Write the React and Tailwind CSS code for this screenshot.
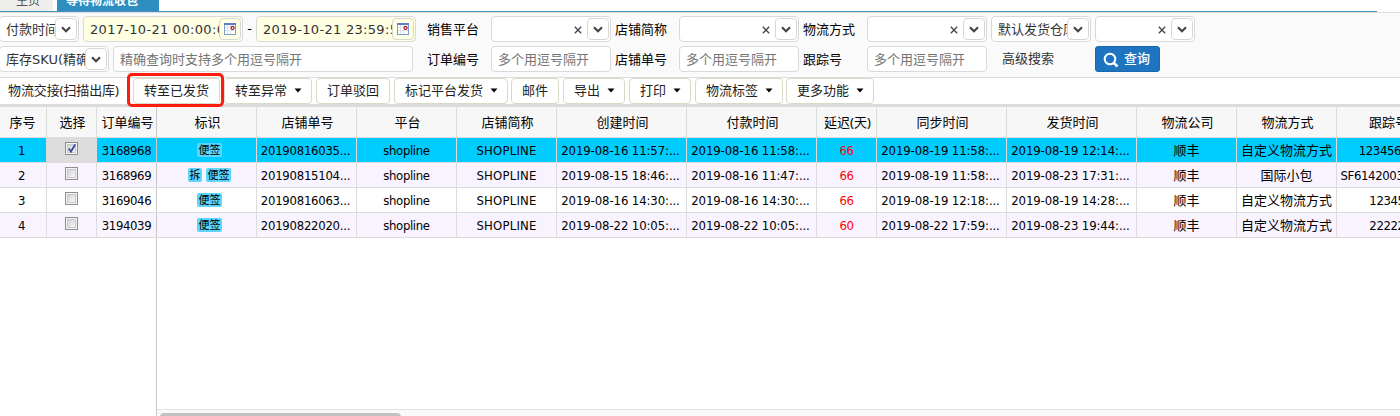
import React, { useState } from 'react'

function classNames(...s) { return s.filter(Boolean).join(' ') }

const COLUMNS = [
  { key: 'no', title: '序号', cls: 'w-[47px] pr-[3px]' },
  { key: 'check', title: '选择', cls: 'w-[50px]' },
  { key: 'order', title: '订单编号', cls: 'w-[60px]' },
  { key: 'tags', title: '标识', cls: 'w-[100px]' },
  { key: 'shopOrder', title: '店铺单号', cls: 'w-[100px]', text: 'tracking-[-0.26px] -ml-[2px]' },
  { key: 'platform', title: '平台', cls: 'w-[100px]' },
  { key: 'shop', title: '店铺简称', cls: 'w-[100px]', text: 'tracking-[0.2px]' },
  { key: 'created', title: '创建时间', cls: 'w-[130px]', text: 'tracking-[-0.1px] -ml-[2px]' },
  { key: 'paid', title: '付款时间', cls: 'w-[130px]', text: 'tracking-[-0.1px] -ml-[2px]' },
  { key: 'delay', title: '延迟(天)', cls: 'w-[60px]', text: 'text-[#f00]' },
  { key: 'synced', title: '同步时间', cls: 'w-[130px]', text: 'tracking-[-0.1px] -ml-[2px]' },
  { key: 'shipped', title: '发货时间', cls: 'w-[130px]', text: 'tracking-[-0.1px] -ml-[2px]' },
  { key: 'company', title: '物流公司', cls: 'w-[100px]', text: 'tracking-normal' },
  { key: 'method', title: '物流方式', cls: 'w-[100px]', text: 'tracking-normal' },
  { key: 'tracking', title: '跟踪号', cls: 'w-[102px]', text: '-ml-px' },
]

const ROWS = [
  { no: 1, order: '3168968', tags: ['便签'], shopOrder: '20190816035...', created: '2019-08-16 11:57:...', paid: '2019-08-16 11:58:...', delay: 66, synced: '2019-08-19 11:58:...', shipped: '2019-08-19 12:14:...', method: '自定义物流方式', tracking: '12345678' },
  { no: 2, order: '3168969', tags: ['拆', '便签'], shopOrder: '20190815104...', created: '2019-08-15 18:46:...', paid: '2019-08-16 11:47:...', delay: 66, synced: '2019-08-19 11:58:...', shipped: '2019-08-23 17:31:...', method: '国际小包', tracking: 'SF6142003...', long: true },
  { no: 3, order: '3169046', tags: ['便签'], shopOrder: '20190816063...', created: '2019-08-16 14:30:...', paid: '2019-08-16 14:30:...', delay: 66, synced: '2019-08-19 12:18:...', shipped: '2019-08-19 14:28:...', method: '自定义物流方式', tracking: '12345' },
  { no: 4, order: '3194039', tags: ['便签'], shopOrder: '20190822020...', created: '2019-08-22 10:05:...', paid: '2019-08-22 10:05:...', delay: 60, synced: '2019-08-22 17:59:...', shipped: '2019-08-23 19:44:...', method: '自定义物流方式', tracking: '22222' },
].map(r => ({ platform: 'shopline', shop: 'SHOPLINE', company: '顺丰', ...r }))

function Chevron() {
  return (
    <svg className="-ml-px" width="10" height="7" viewBox="0 0 10 7" fill="none" stroke="#444" strokeWidth="2.1">
      <path d="M1 1.2 L5 5.2 L9 1.2" />
    </svg>
  )
}

function CalendarIcon() {
  return (
    <svg width="12" height="12" viewBox="0 0 12 12">
      <rect x="0.5" y="0.5" width="11" height="11" fill="#fff" stroke="#7c9bd0" />
      <rect width="12" height="2" fill="#5b7fc0" />
      <path d="M3.5 2v9M6.5 2v9M1 4.5h10M1 7.5h10" stroke="#dde0e8" fill="none" />
      <circle cx="8.6" cy="4.9" r="1.5" fill="#fff" stroke="#a5181f" strokeWidth="1.2" />
    </svg>
  )
}

function InnerButton({ children }) {
  return <button className="flex h-[22px] w-[22px] shrink-0 items-center justify-center rounded-[4px] border border-[#d6d6d6] bg-white">{children}</button>
}

const FIELD = 'flex h-[26px] shrink-0 items-center rounded-[4px] border border-[#d9d9d9] bg-white'

function Select({ text, clear, className }) {
  return (
    <div className={classNames(FIELD, 'pr-px', className)}>
      <span className="min-w-0 flex-1 overflow-hidden pt-px pl-[6px] whitespace-nowrap text-[#333]">{text}</span>
      {clear && (
        <svg className="mt-px mr-[5px] shrink-0" width="8" height="8" viewBox="0 0 8 8" stroke="#444b55" strokeWidth="1.4">
          <path d="M0.8 0.8l6.4 6.4M7.2 0.8l-6.4 6.4" />
        </svg>
      )}
      <InnerButton><Chevron /></InnerButton>
    </div>
  )
}

function DateField({ value }) {
  return (
    <div className="flex h-[26px] w-[160px] shrink-0 items-center rounded-[4px] border border-[#d9d9d9] bg-[#ffffe4] pr-px">
      <span className="min-w-0 flex-1 overflow-hidden pt-px pl-[6px] tracking-[0.3px] whitespace-nowrap text-[#333]">{value}</span>
      <button className="flex h-[22px] w-[22px] shrink-0 items-center justify-center rounded-[4px] border border-[#d6d6d6] bg-[#ffffe4]"><CalendarIcon /></button>
    </div>
  )
}

function Input({ placeholder, className }) {
  return <div className={classNames(FIELD, 'pt-px pl-[6px] text-[#757575]', className)}>{placeholder}</div>
}

function Label({ children, className }) {
  return <span className={classNames('shrink-0 pt-px whitespace-nowrap text-black', className)}>{children}</span>
}

function ToolButton({ children, menu, className }) {
  return (
    <button className={classNames('flex h-[26px] shrink-0 items-center rounded-[4px] border border-[#d8d9c6] bg-white pb-[2px] pl-[10px] whitespace-nowrap text-[#222]', className)}>
      {children}
      {menu && <svg className="mt-px ml-[7px]" width="8" height="5" viewBox="0 0 8 5"><path d="M0.5 0.5h7L4 4.6z" fill="#000" /></svg>}
    </button>
  )
}

function Checkbox({ checked, onClick }) {
  return (
    <button onClick={onClick} className="mb-[3px] flex h-[13px] w-[13px] items-center justify-center border border-[#8e8f8f] bg-[#f4f4f4] p-px">
      <span className="block h-full w-full border border-[#c6c9cc] bg-linear-to-br from-[#cfd3d6] to-[#f8f8f8]">
        {checked && (
          <svg className="-mt-px" width="9" height="10" viewBox="0 0 9 10" fill="none" stroke="#3c4fa5" strokeWidth="1.9">
            <path d="M0.8 4.6 L3 7.6 L7.2 0.6" />
          </svg>
        )}
      </span>
    </button>
  )
}

function Cell({ col, row, checked, onToggle }) {
  if (col.key === 'check') return <Checkbox checked={checked} onClick={onToggle} />
  if (col.key === 'tags') {
    return (
      <div className="mb-px ml-[6px] flex gap-[4px]">
        {row.tags.map(t => <span key={t} className="h-[14px] rounded-[2px] bg-[#5cd6ff] px-[1.5px] font-['Noto_Sans_CJK_SC'] text-[11px] leading-[13px] tracking-normal">{t}</span>)}
      </div>
    )
  }
  return <span className={classNames('pt-[2px]', col.text, col.key === 'tracking' && row.long && 'pr-[20px]')}>{row[col.key]}</span>
}

export default function App() {
  const [checked, setChecked] = useState([1])
  const toggle = (no) => setChecked(c => c.includes(no) ? c.filter(n => n !== no) : [...c, no])

  return (
    <div className="flex h-[416px] w-[1400px] flex-col overflow-hidden bg-white font-['DejaVu_Sans','Noto_Sans_CJK_SC',sans-serif] text-[13px] leading-[20px]">
      <nav className="flex h-[12px] w-[1377px] shrink-0 items-end gap-[4px] overflow-hidden border-b border-[#4492bd] text-[12px]">
        <div className="flex h-[20px] w-[53px] items-center bg-[#eeefed] pl-[16px] text-[#555]">主页</div>
        <div className="flex h-[20px] w-[102px] items-center bg-[#2e8ec0] pl-[9px] font-bold text-white">等待物流收包</div>
      </nav>

      <section className="flex h-[66px] shrink-0 flex-col gap-[4px] border-y border-[#dcdcdc] bg-[#fafafa] pt-[3px]">
        <div className="-ml-px flex items-center">
          <Select text="付款时间" className="w-[80px]" />
          <div className="ml-[4px] flex items-center">
            <DateField value="2017-10-21 00:00:00" />
            <span className="w-[13px] text-center">-</span>
            <DateField value="2019-10-21 23:59:59" />
          </div>
          <Label className="ml-[11px] w-[64px]">销售平台</Label>
          <Select clear className="w-[120px]" />
          <Label className="ml-[4px] w-[64px]">店铺简称</Label>
          <Select clear className="w-[120px]" />
          <Label className="ml-[4px] w-[64px]">物流方式</Label>
          <Select clear className="w-[120px]" />
          <Select text="默认发货仓库" className="ml-[4px] w-[100px]" />
          <Select clear className="ml-[4px] w-[100px]" />
        </div>
        <div className="-ml-px flex items-center">
          <Select text="库存SKU(精确)" className="w-[110px]" />
          <Input placeholder="精确查询时支持多个用逗号隔开" className="ml-[4px] w-[300px]" />
          <Label className="ml-[14px] w-[64px]">订单编号</Label>
          <Input placeholder="多个用逗号隔开" className="w-[120px]" />
          <Label className="ml-[4px] w-[64px]">店铺单号</Label>
          <Input placeholder="多个用逗号隔开" className="w-[120px]" />
          <Label className="ml-[4px] w-[64px]">跟踪号</Label>
          <Input placeholder="多个用逗号隔开" className="w-[120px]" />
          <span className="ml-[15px] w-[93px] text-[#333]">高级搜索</span>
          <button className="flex h-[26px] w-[65px] items-center gap-[5px] rounded-[3px] border border-[#1a68ad] bg-[#1f74bf] pl-[7px] font-medium text-white">
            <svg className="mt-[2px]" width="16" height="16" viewBox="0 0 16 16" fill="none" stroke="#fff">
              <circle cx="7" cy="7" r="5.3" strokeWidth="2" />
              <path d="M10.8 10.8l3.7 3.7" strokeWidth="2.6" />
            </svg>
            查询
          </button>
        </div>
      </section>

      <div className="flex h-[29px] shrink-0 items-start border-b-[3px] border-[#dcdcdc] font-['Noto_Sans','Noto_Sans_CJK_SC',sans-serif]">
        <span className="w-[133px] pt-[2px] pl-[8px] tracking-[-0.1px] whitespace-nowrap text-[#222]">物流交接(扫描出库)</span>
        <div className="relative">
          <ToolButton className="w-[87px]">转至已发货</ToolButton>
          <div className="pointer-events-none absolute -top-[5px] -left-[6px] z-10 h-[34px] w-[97px] rounded-[5px] border-3 border-[#ff1c0c]" />
        </div>
        <ToolButton menu className="ml-[4px] w-[88px]">转至异常</ToolButton>
        <ToolButton className="ml-[4px] w-[74px]">订单驳回</ToolButton>
        <ToolButton menu className="ml-[4px] w-[114px]">标记平台发货</ToolButton>
        <ToolButton className="ml-[3px] w-[48px]">邮件</ToolButton>
        <ToolButton menu className="ml-[4px] w-[62px]">导出</ToolButton>
        <ToolButton menu className="ml-[4px] w-[62px]">打印</ToolButton>
        <ToolButton menu className="ml-[4px] w-[88px]">物流标签</ToolButton>
        <ToolButton menu className="ml-[3px] w-[88px]">更多功能</ToolButton>
      </div>

      <div className="w-[1439px] shrink-0 text-black">
        <div className="flex h-[31px] border-b border-[#dcdcdc] bg-[#f7f7f7] font-['Noto_Sans','Noto_Sans_CJK_SC',sans-serif]">
          {COLUMNS.map(c => (
            <div key={c.key} className={classNames('flex shrink-0 items-center justify-center border-r pl-[2px] whitespace-nowrap', c.key === 'order' ? 'border-[#c9c9c9]' : 'border-[#dcdcdc]', c.cls)}>{c.title}</div>
          ))}
        </div>
        {ROWS.map((row, i) => (
          <div key={row.no} className={classNames('flex h-[25px] border-b border-[#dcdcdc]', i === 0 ? 'bg-[#00ccff]' : i % 2 ? 'bg-[#f8f3ff]' : 'bg-white')}>
            {COLUMNS.map(c => (
              <div
                key={c.key}
                className={classNames(
                  "flex shrink-0 items-center justify-center overflow-hidden border-r font-['DejaVu_Sans_Condensed','DejaVu_Sans','Noto_Sans_CJK_SC',sans-serif] tracking-[-0.36px] whitespace-nowrap font-stretch-semi-condensed",
                  c.key === 'order' ? 'border-[#c9c9c9]' : 'border-[#dcdcdc]',
                  c.key === 'check' && i === 0 && 'bg-[#dcdcdc]',
                  c.cls
                )}
              >
                <Cell col={c} row={row} checked={checked.includes(row.no)} onToggle={() => toggle(row.no)} />
              </div>
            ))}
          </div>
        ))}
      </div>

      <div className="flex min-h-0 flex-1">
        <div className="w-[157px] border-r border-[#c9c9c9]" />
        <div className="flex flex-1 flex-col justify-end">
          <div className="h-[7px] overflow-hidden border-t border-[#e2e2e2] bg-[#f9f9f9] pt-[3px] pl-[3px]">
            <div className="h-[8px] w-[241px] rounded-full bg-[#c1c1c1]" />
          </div>
        </div>
      </div>
    </div>
  )
}
